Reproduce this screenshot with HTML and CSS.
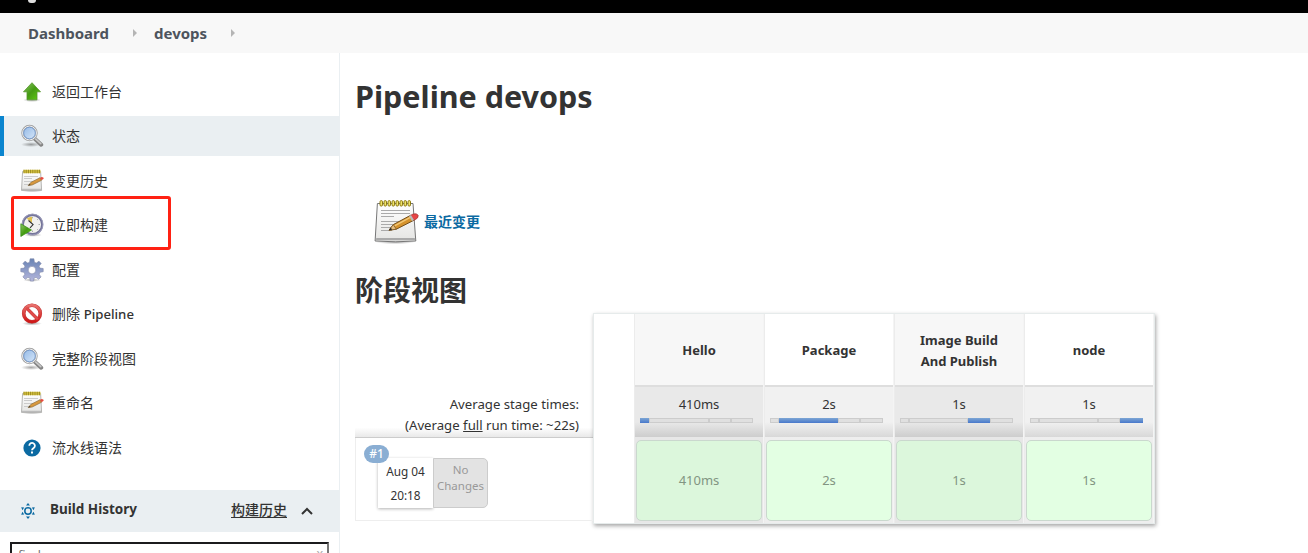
FILE: index.html
```html
<!DOCTYPE html>
<html lang="zh-CN">
<head>
<meta charset="utf-8">
<title>devops [Jenkins]</title>
<link rel="stylesheet" href="styles.css">
</head>
<body>
<svg class="defs" width="0" height="0" aria-hidden="true">
  <defs>
    <linearGradient id="green" x1="0" y1="0" x2="1" y2="1"><stop offset="0" stop-color="#8bc766"/><stop offset=".5" stop-color="#459b13"/><stop offset="1" stop-color="#61cf12"/></linearGradient>
    <linearGradient id="lens" x1="0" y1="0" x2="1" y2="1"><stop offset="0" stop-color="#8fb6e4"/><stop offset="1" stop-color="#dbeafb"/></linearGradient>
    <linearGradient id="paper" x1="0" y1="0" x2="0" y2="1"><stop offset="0" stop-color="#fff"/><stop offset="1" stop-color="#e4e4e2"/></linearGradient>
    <linearGradient id="gear" x1="0" y1="0" x2="0" y2="1"><stop offset="0" stop-color="#6883b4"/><stop offset="1" stop-color="#b4b6dc"/></linearGradient>
    <linearGradient id="red" x1="0" y1="0" x2="0" y2="1"><stop offset="0" stop-color="#e8706c"/><stop offset="1" stop-color="#cf1717"/></linearGradient>
    <radialGradient id="shade"><stop offset="0" stop-color="#000" stop-opacity=".35"/><stop offset="1" stop-color="#000" stop-opacity="0"/></radialGradient>
    <symbol id="up" viewBox="0 0 24 24">
      <ellipse cx="12" cy="20" rx="9" ry="2" fill="url(#shade)"/>
      <path d="M12 2.7 20.5 11.8H17V19.8H7V11.8H3.5Z" fill="url(#green)" stroke="#55952c" stroke-width=".8" stroke-linejoin="round"/>
    </symbol>
    <symbol id="search" viewBox="0 0 24 24">
      <ellipse cx="11" cy="20.5" rx="10" ry="2.5" fill="url(#shade)"/>
      <path d="m14.5 14.5 6.7 6.2" stroke="#858585" stroke-width="4" stroke-linecap="round"/>
      <path d="m15.3 14.7 5.5 5" stroke="#c9c9c9" stroke-width="1.6" stroke-linecap="round"/>
      <circle cx="9.5" cy="9" r="7.1" fill="url(#lens)" stroke="#a0a0a0" stroke-width="2.2"/>
      <circle cx="9.5" cy="9" r="6.9" fill="none" stroke="#efefef" stroke-width="1"/>
      <circle cx="9.5" cy="9" r="5.8" fill="none" stroke="#6a91c8" stroke-width=".8"/>
    </symbol>
    <symbol id="note-small" viewBox="0 0 24 24">
      <ellipse cx="12" cy="21.8" rx="11" ry="1.4" fill="url(#shade)"/>
      <path d="M2.6 2.5H20.6L21.6 21.4H1.5Z" fill="url(#paper)" stroke="#a5a5a2" stroke-width=".8"/>
      <path d="M2 19.8H21.2V21.3H1.9Z" fill="#bbb"/>
      <path d="M4 7.5H18M4 9.5H12M4 12.5H15M4 15.5H9" stroke="#c6c6c6" stroke-width=".9"/>
      <path d="M3.5 2.5H20.5" stroke="#d8c645" stroke-width="3.4"/>
      <path d="M3.5 2.5H20.5" stroke="#9b8920" stroke-width="3.4" stroke-dasharray="1 1.2"/>
      <path d="M8.2 16.6 10.8 13.4 20 8.7 21.5 11.3 12.2 16Z" fill="#d8983d" stroke="#80602c" stroke-width=".6"/>
      <path d="m8.2 16.6 1.4-1.7 1 1.2Z" fill="#333"/>
      <path d="m20 8.7 1.7-.8q2.2 0 2 1.9l-2.2 1.5Z" fill="#e64c3f"/>
    </symbol>
    <symbol id="notepad" viewBox="0 0 48 48">
      <ellipse cx="23" cy="45" rx="20" ry="2.2" fill="url(#shade)"/>
      <path d="M5.4 6.5H41L43.8 44Q24 45.6 3.1 44Z" fill="url(#paper)" stroke="#777" stroke-width="1" stroke-linejoin="round"/>
      <path d="M4.2 41H42.8L43.1 43.2H4Z" fill="#aaa"/>
      <path d="M9 13.5H38M9 16.5H38M9 19.5H22M9 24.5H38M9 27.5H33M9 30.5H24M9 33.5H20" stroke="#aaa" stroke-width="1"/>
      <g fill="#efe46a" stroke="#8d7a12" stroke-width="1"><rect x="8" y="3.6" width="2.5" height="5.5" rx="1.2"/><rect x="12" y="3.6" width="2.5" height="5.5" rx="1.2"/><rect x="16" y="3.6" width="2.5" height="5.5" rx="1.2"/><rect x="20" y="3.6" width="2.5" height="5.5" rx="1.2"/><rect x="24" y="3.6" width="2.5" height="5.5" rx="1.2"/><rect x="28" y="3.6" width="2.5" height="5.5" rx="1.2"/><rect x="32" y="3.6" width="2.5" height="5.5" rx="1.2"/><rect x="36" y="3.6" width="2.5" height="5.5" rx="1.2"/></g>
      <path d="M17 33.2 21.3 27.6 38.8 18.2 42 23.2 24.3 32.2Z" fill="#d5922c" stroke="#73501e" stroke-width="1"/>
      <path d="M22.5 28.8 39.6 19.6" stroke="#f2c775" stroke-width="1.5"/>
      <path d="M17 33.2 21.3 27.6 24.3 32.2Z" fill="#e5bd80" stroke="#73501e" stroke-width=".7"/>
      <path d="m17 33.2 1.8-2.4 1.3 1.8Z" fill="#222"/>
      <path d="M38.4 18.4 41.2 17Q45.4 15.9 46.2 18.5 46.3 20.8 44.2 22L41.8 23.3Z" fill="#e64646" stroke="#9d2929" stroke-width=".7"/>
      <path d="M37 19.1 39 18.1 42 23.1 40 24.1Z" fill="#bbb"/>
    </symbol>
    <symbol id="clock" viewBox="0 0 24 24">
      <ellipse cx="13" cy="22" rx="9" ry="1.8" fill="url(#shade)"/>
      <circle cx="12.5" cy="11.5" r="9.7" fill="#f1f1ee" stroke="#74749a" stroke-width="2.2"/>
      <circle cx="12.5" cy="11.5" r="10.4" fill="none" stroke="#a9a9c4" stroke-width=".7"/>
      <path d="M12 10 6.7 5.6Q9 3.8 12 3.7Z" fill="#dfc14e"/>
      <path d="m8.5 7.5 4.6 4.1-3.1 3.2" fill="none" stroke="#333" stroke-width="1.1"/>
      <path d="M12.5 3.8v1.5M20 11.5h-1.5M12.5 19v-1.5M17.8 6.2l-.8.8M17.8 16.8l-.8-.8" stroke="#999" stroke-width=".8"/>
      <path d="M.8 10.8 11.5 17 .8 23.5Z" fill="url(#green)" stroke="#348b13" stroke-width=".7"/>
    </symbol>
    <symbol id="cog" viewBox="0 0 24 24">
      <ellipse cx="12" cy="22" rx="9" ry="1.8" fill="url(#shade)"/>
      <path fill-rule="evenodd" d="M10.1 .8h3.8l.5 3.5 1.9.8L19 3.2 21.2 5.6 19 8.1l.8 2 3.4.4v3.2l-3.3.6-.8 1.9 2 2.7-2.4 2.4-2.7-2-1.9.8-.6 3h-3.1l-.5-3-2-.8-2.6 2-2.4-2.4 2-2.7-.8-1.9-3.3-.6v-3.2l3.4-.4.8-2-2.1-2.5L5 3.2l2.7 1.9 1.9-.8ZM12 8.3a3.8 3.8 0 1 0 0 7.6 3.8 3.8 0 0 0 0-7.6Z" fill="url(#gear)" stroke="#7d86a8" stroke-width=".6"/>
    </symbol>
    <symbol id="ban" viewBox="0 0 24 24">
      <ellipse cx="12" cy="21.5" rx="10" ry="2" fill="url(#shade)"/>
      <circle cx="12" cy="11.5" r="8.3" fill="#fff" stroke="#c23a3a" stroke-width="3.6"/>
      <path d="m6.2 5.7 11.6 11.6" stroke="#c23a3a" stroke-width="3.3"/>
      <circle cx="12" cy="11.5" r="8.3" fill="none" stroke="url(#red)" stroke-width="2.8"/>
      <path d="m6.2 5.7 11.6 11.6" stroke="#e04a4a" stroke-width="2.5"/>
    </symbol>
    <symbol id="help" viewBox="0 0 24 24">
      <circle cx="12" cy="12" r="8.6" fill="#0b6aa2"/>
      <path d="M9.3 9.8a2.8 2.8 0 1 1 4.4 2.2c-1.1.8-1.7 1.1-1.7 2.2" fill="none" stroke="#fff" stroke-width="1.8"/><rect x="11" y="15.5" width="2" height="2" fill="#fff"/>
    </symbol>
  </defs>
</svg>
<header class="topbar"><span class="mascot"></span></header>
<nav class="crumbs"><a class="crumb-home">Dashboard</a><i class="arrow"></i><a class="crumb-job">devops</a><i class="arrow"></i></nav>
<div class="page">
  <aside class="side">
    <div class="tasks">
      <a class="task"><svg><use href="#up"/></svg><span class="label">返回工作台</span></a>
      <a class="task active"><svg><use href="#search"/></svg><span class="label">状态</span></a>
      <a class="task"><svg><use href="#note-small"/></svg><span class="label">变更历史</span></a>
      <a class="task"><svg><use href="#clock"/></svg><span class="label">立即构建</span><i class="highlight"></i></a>
      <a class="task"><svg><use href="#cog"/></svg><span class="label">配置</span></a>
      <a class="task"><svg><use href="#ban"/></svg><span class="label">删除 <span class="latin">Pipeline</span></span></a>
      <a class="task"><svg><use href="#search"/></svg><span class="label">完整阶段视图</span></a>
      <a class="task"><svg><use href="#note-small"/></svg><span class="label">重命名</span></a>
      <a class="task"><svg><use href="#help"/></svg><span class="label">流水线语法</span></a>
    </div>
    <div class="history">
      <svg class="sun" viewBox="0 0 16 16"><circle cx="8" cy="8" r="3.2" fill="none" stroke="#0b6aa2" stroke-width="1.5"/><path d="M8 0l2 2.5H6ZM8 16l2-2.5H6ZM1.2 4.2l3 .4-1.8 2.6ZM14.8 4.2l-3 .4 1.8 2.6ZM1.2 11.8l3-.4-1.8-2.6ZM14.8 11.8l-3-.4 1.8-2.6Z" fill="#0b6aa2"/></svg>
      <b class="history-title">Build History</b>
      <a class="trend">构建历史</a>
      <svg class="chevron" viewBox="0 0 12 8"><path d="m1 7 5-5 5 5" fill="none" stroke="#333" stroke-width="2"/></svg>
    </div>
    <div class="find"><span>find</span><span class="clear">x</span></div>
  </aside>
  <main class="main">
    <h1>Pipeline devops</h1>
    <div class="changes"><svg><use href="#notepad"/></svg><a>最近变更</a></div>
    <h2>阶段视图</h2>
    <div class="stage-view">
      <section class="runs">
        <div class="average"><p class="avg-one">Average stage times:</p><p class="avg-two">(Average <u>full</u> run time: ~22s)</p></div>
        <div class="run">
          <span class="badge">#1</span>
          <div class="date"><span>Aug 04</span><span>20:18</span></div>
          <div class="nochange"><span>No</span><span>Changes</span></div>
        </div>
      </section>
      <section class="stages">
        <div class="spacer"></div>
        <div class="stage odd"><div class="name">Hello</div><div class="avg"><span>410ms</span><div class="bar"><i style="width:9px" class="on"></i><i style="width:60px"></i><i style="width:22px"></i><i style="width:22px"></i></div></div><div class="cell"><div class="ok">410ms</div></div></div>
        <div class="stage"><div class="name">Package</div><div class="avg"><span>2s</span><div class="bar"><i style="width:9px"></i><i style="width:59px" class="on"></i><i style="width:22px"></i><i style="width:23px"></i></div></div><div class="cell"><div class="ok">2s</div></div></div>
        <div class="stage odd"><div class="name">Image Build<br>And Publish</div><div class="avg"><span>1s</span><div class="bar"><i style="width:9px"></i><i style="width:59px"></i><i style="width:22px" class="on"></i><i style="width:23px"></i></div></div><div class="cell"><div class="ok">1s</div></div></div>
        <div class="stage"><div class="name">node</div><div class="avg"><span>1s</span><div class="bar"><i style="width:9px"></i><i style="width:59px"></i><i style="width:22px"></i><i style="width:23px" class="on"></i></div></div><div class="cell"><div class="ok">1s</div></div></div>
      </section>
    </div>
  </main>
</div>
</body>
</html>
```
FILE: styles.css
```css
* { box-sizing: border-box; }
body { margin: 0; height: 553px; overflow: hidden; background: #fff; color: #333; font: 14px/21px "Noto Sans", "Noto Sans CJK SC", sans-serif; }
.defs { position: absolute; }
.topbar { height: 13px; background: #000; padding-left: 28px; }
.mascot { display: block; width: 8px; height: 3px; background: #ddd; border-radius: 0 0 3px 3px; }
.crumbs { height: 40px; background: #f8f8f8; display: flex; align-items: center; padding-left: 28px; font-size: 15px; font-weight: 700; color: #4d545d; }
.crumb-home { width: 105px; }
.crumb-job { width: 77px; margin-left: 17px; }
.arrow { width: 0; border: 4px solid transparent; border-left: 4px solid #b5b5b5; border-right: 0; }
.page { display: flex; height: 500px; }
.side { width: 340px; border-right: 1px solid #eaeff2; padding-top: 18.5px; }
.tasks { display: flex; flex-direction: column; gap: 4.5px; }
.task { height: 40px; display: flex; align-items: center; padding-left: 20px; gap: 8px; position: relative; white-space: nowrap; }
.task svg { width: 24px; height: 24px; }
.label { padding-bottom: 1px; }
.active { background: #eaeff2; box-shadow: inset 4px 0 #0b85cf; }
.latin { font-size: 13.2px; font-weight: 500; }
.highlight { position: absolute; left: 11px; top: -9px; width: 160px; height: 54px; border: 3px solid #ff2113; border-radius: 3px; }
.history { margin-top: 22.5px; height: 42px; background: #eaeff2; display: flex; align-items: center; padding-left: 20px; }
.sun { width: 16px; height: 16px; }
.history-title { width: 181px; margin-left: 14px; font-size: 13.5px; font-weight: 700; padding-bottom: 3px; }
.trend { text-decoration: underline; text-underline-offset: 2px; font-weight: 500; padding-bottom: 3px; }
.chevron { width: 12px; height: 8px; margin-left: 14px; }
.find { margin: 10px 10px 0; height: 30px; border: 2px solid #767676; border-top-color: #1b1b1d; border-left-color: #1b1b1d; padding: 1px 4px 0 6px; display: flex; justify-content: space-between; font-size: 12.5px; color: #777; }
.clear { color: #aaa; line-height: 18px; }
.main { flex: 1; padding-left: 15px; }
h1 { margin: 21px 0 0; font-size: 30.5px; line-height: 44px; font-weight: 700; }
.changes { margin: 79px 0 0 17px; height: 48px; display: flex; align-items: center; gap: 4px; color: #0b6aa2; font-weight: 600; }
.changes svg { width: 48px; height: 48px; }
h2 { margin: 24px 0 0; font-size: 28px; line-height: 42px; font-weight: 700; }
.stage-view { display: flex; height: 211px; margin-top: 2px; }
.runs { width: 238px; padding-top: 76px; }
.average { height: 49px; padding: 5px 14px 0 0; text-align: right; border-bottom: 1px solid #ccc; background: linear-gradient(transparent 80%, #e9e9e9); white-space: nowrap; font-size: 13.2px; }
.average p { margin: 0; }
.run { position: relative; height: 83px; border: 1px solid #eee; border-top: 0; padding: 20px 0 0 22px; display: flex; }
.badge { position: absolute; left: 8px; top: 7px; width: 25px; height: 18px; border-radius: 9px; background: #8aaed3; color: #fff; font-size: 12px; line-height: 18px; text-align: center; font-weight: 500; }
.date { width: 55px; height: 50px; background: #fff; box-shadow: 0 1px 3px rgba(0,0,0,.3); font-size: 11.8px; line-height: 24px; padding-top: 1px; text-align: center; display: flex; flex-direction: column; }
.nochange { width: 55px; height: 50px; border: 1px solid #ccc; border-radius: 0 5px 5px 0; background: #e3e3e3; color: #999; font-size: 11.5px; line-height: 16px; padding-top: 3px; text-align: center; display: flex; flex-direction: column; }
.stages { width: 562px; height: 211px; border: 1px solid #e6ebeb; box-shadow: 1px 2px 4px rgba(0,0,0,.35); display: grid; grid-template-columns: 40px repeat(4, 130px); background: #fff; }
.stage { border-left: 1px solid #ececec; border-right: 1px solid #f4f4f4; background: #fff; }
.name { height: 71px; padding-top: 2px; display: flex; align-items: center; justify-content: center; text-align: center; font-size: 13px; font-weight: 700; }
.odd .name { background: #f7f7f7; }
.avg { height: 52px; border-top: 2px solid #dedede; background: linear-gradient(#f1f1f1 70%, #d8d8d8); padding: 7px 5px 0; text-align: center; }
.odd .avg { background: linear-gradient(#e9e9e9 70%, #cdcdcd); }
.avg span { display: block; font-size: 13px; }
.bar { width: 113px; height: 5px; margin-top: 3px; display: flex; }
.bar i { height: 5px; border: 1px solid #ccc; background: #e0e0e0; }
.bar .on { border: 0; background: linear-gradient(#7da6d4, #4878cb); }
.cell { height: 86px; padding: 3px 1px 2px; background: #eee; }
.odd .cell { background: #e7e7e7; }
.ok { height: 81px; border: 1px solid #cad8ce; border-radius: 5px; background: #e3ffe3; display: flex; align-items: center; justify-content: center; font-size: 13px; color: #829582; }
.odd .ok { background: #dcf7dc; }
```
